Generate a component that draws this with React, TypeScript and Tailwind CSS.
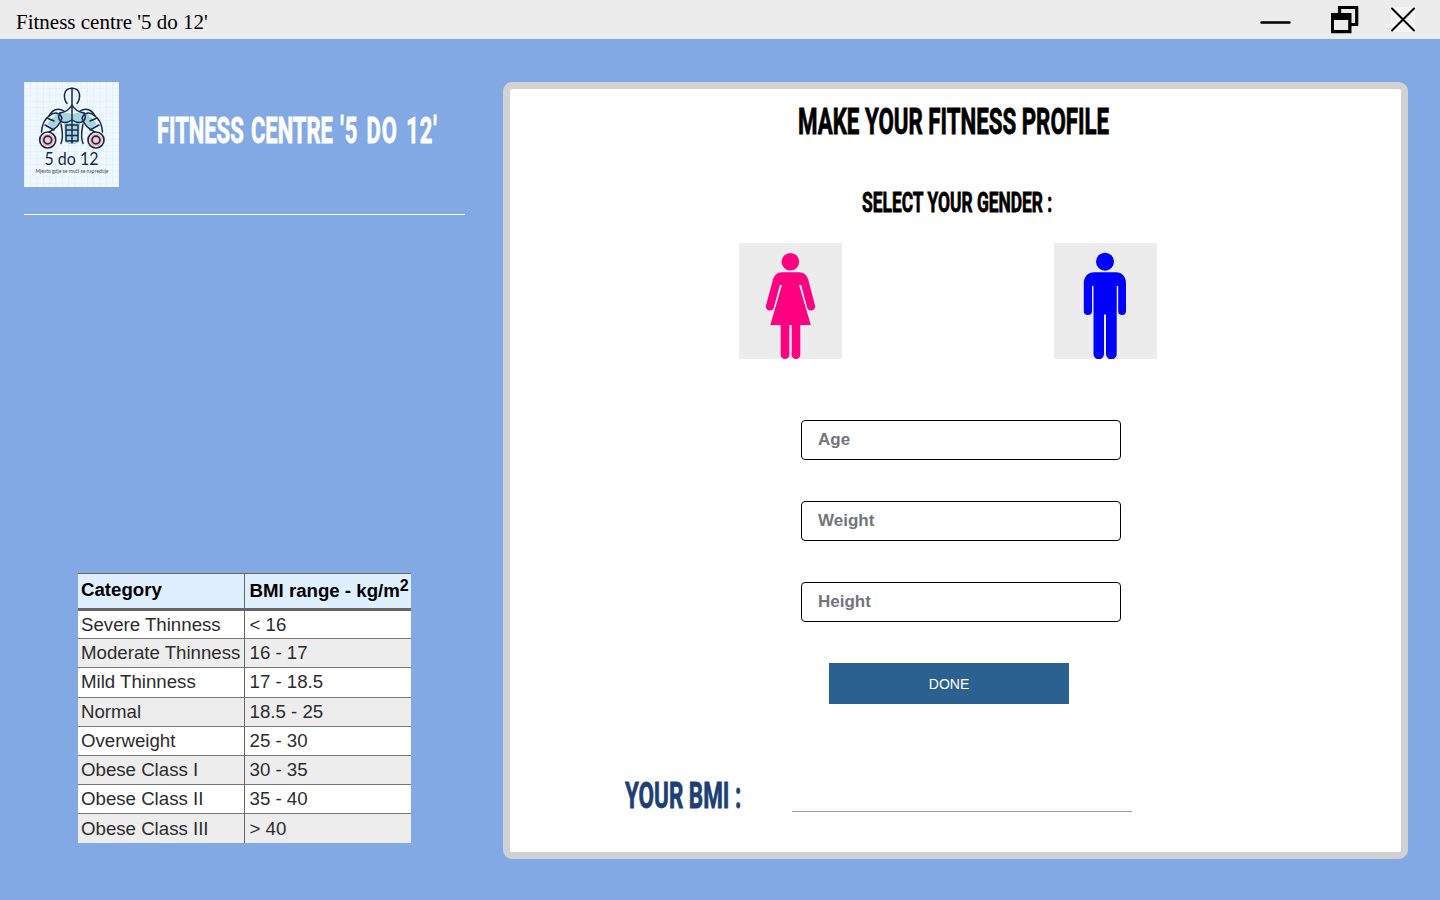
const display = "inline-block whitespace-nowrap origin-left font-['Roboto','Liberation_Sans',sans-serif] font-bold [-webkit-text-stroke:0.8px_currentColor]";

const rows: [string, string][] = [
  ["Severe Thinness", "< 16"],
  ["Moderate Thinness", "16 - 17"],
  ["Mild Thinness", "17 - 18.5"],
  ["Normal", "18.5 - 25"],
  ["Overweight", "25 - 30"],
  ["Obese Class I", "30 - 35"],
  ["Obese Class II", "35 - 40"],
  ["Obese Class III", "> 40"],
];

function Logo() {
  return (
    <svg width="95" height="105" viewBox="0 0 95 105" className="block shrink-0">
      <defs>
        <pattern id="grid" width="6.3" height="6.3" patternUnits="userSpaceOnUse">
          <path d="M0 0H6.3M0 0V6.3" stroke="#d9ebf4" strokeWidth="1" fill="none" />
        </pattern>
      </defs>
      <rect width="95" height="105" fill="#eff8fe" />
      <rect width="95" height="105" fill="url(#grid)" />
      <g fill="#a5d5de">
        <path d="M38 30L48 32L58 30L64 31L66 36L61 41L48 39L35 41L30 36L32 31Z" />
        <path d="M40 41H56L55 60L51 62H45L41 60Z" />
        <path d="M29 35L23 42L30 47L35 39Z" />
        <path d="M67 35L73 42L66 47L61 39Z" />
      </g>
      <g fill="none" stroke="#17294d" strokeWidth="1.5" strokeLinecap="round" strokeLinejoin="round">
        <path d="M43 21.500C39 16 39 6.300 48 6.300S57 16 53 21.500" />
        <path d="M48 6.300V61" />
        <path d="M48 23C46 27 41 30 36 31M48 23C50 27 55 30 60 31" />
        <path d="M40 29C34 25 28 28 25 34C21 37 18 43 17.500 50M56 29C62 25 68 28 71 34C75 37 78 43 78.500 50" />
        <path d="M25 34C31 29 36 31 38 36C36 42 32 47 25 50M71 34C65 29 60 31 58 36C60 42 64 47 71 50" />
        <path d="M23 36L30 39M73 36L66 39M21 43L30 48M75 43L66 48" />
        <path d="M36 31C32 38 39 44 48 38C57 44 64 38 60 31" />
        <path d="M37 42C38 49 40 54 37 61.500M59 42C58 49 56 54 59 61.500" />
        <path d="M42 43H54V48H42ZM42 48H54V53.500H42ZM42 53.500H54V59H42Z" />
      </g>
      <g stroke="#17294d" strokeWidth="1.700">
        <circle cx="23.700" cy="58" r="8" fill="#fff" />
        <circle cx="23.700" cy="58" r="6.300" fill="#fbb3b5" stroke="none" />
        <circle cx="23.700" cy="58" r="3.900" fill="#fbc6c6" />
        <circle cx="72" cy="58" r="8" fill="#fff" />
        <circle cx="72" cy="58" r="6.300" fill="#fbb3b5" stroke="none" />
        <circle cx="72" cy="58" r="3.900" fill="#fbc6c6" />
      </g>
      <text x="20.500" y="82.700" textLength="54" lengthAdjust="spacingAndGlyphs" fontSize="17" fill="#17294d" className="font-['Lato',sans-serif]">5 do 12</text>
      <text x="11.500" y="91" textLength="73" lengthAdjust="spacingAndGlyphs" fontSize="5" fill="#3c5068" className="font-['Lato',sans-serif]">Mjesto gdje se muči se napreduje</text>
    </svg>
  );
}

function Female() {
  return (
    <svg width="103" height="116" viewBox="0 0 103 116" className="block" fill="#ff0080">
      <circle cx="51.400" cy="18.700" r="8.800" />
      <path d="M43 29.300H60C65 29.300 68 32.500 69.200 36.500L76 62.500C77.200 67.500 70 69.500 68.300 65L62.200 42H60L71.800 82H61.300V111.700A4.300 4.300 0 0 1 52.700 111.700V82H50.300V111.700A4.300 4.300 0 0 1 41.700 111.700V82H31.300L43 42H40.800L34.700 65C33 69.500 25.800 67.500 27 62.500L34 36.500C35.200 32.500 38.200 29.300 43 29.300Z" />
    </svg>
  );
}

function Male() {
  return (
    <svg width="103" height="116" viewBox="0 0 103 116" className="block" fill="#0000ff">
      <circle cx="51" cy="18.700" r="9" />
      <path d="M40 29.300H62C68 29.300 72 34 72 40V68A3.900 3.900 0 0 1 64.200 68V43H62.700V111A5.300 5.300 0 0 1 52 111V71.500H50V111A5.200 5.200 0 0 1 39.500 111V43H38V68A4.100 4.100 0 0 1 29.800 68V40C29.800 34 34 29.300 40 29.300Z" />
    </svg>
  );
}

export default function App() {
  return (
    <div className="flex h-[900px] w-[1440px] flex-col overflow-hidden bg-[#83a9e4] text-black">
      <header className="flex h-[39px] shrink-0 items-start bg-[#ececec] pl-4">
        <span className="mt-[7px] font-['Liberation_Serif',serif] text-[21px] leading-[30px]">Fitness centre '5 do 12'</span>
        <svg width="180" height="39" viewBox="1260 0 180 39" className="ml-auto block">
          <path d="M1261.500 22.500H1289.500" stroke="#000" strokeWidth="2.400" strokeLinecap="round" />
          <path d="M1339.500 14V7.500H1356.700V24.500H1350" fill="none" stroke="#000" strokeWidth="3.200" />
          <path d="M1331 13H1351.500V33.200H1331ZM1334 20V30H1348.200V20Z" fillRule="evenodd" />
          <rect x="1391" y="7" width="24" height="25" fill="#f4f4f4" />
          <path d="M1392 8.500L1414 30.500M1414 8.500L1392 30.500" stroke="#000" strokeWidth="2" strokeLinecap="round" />
        </svg>
      </header>

      <main className="flex grow items-start pt-[43px] pl-6">
        <aside className="flex w-[441px] shrink-0 flex-col">
          <div className="flex h-[133px] items-start border-b border-white">
            <Logo />
            <h1 className="ml-[38px] mt-[27px] w-[280px] text-[36px] leading-[42px] text-white">
              <span className={`${display} scale-x-[0.61] [word-spacing:3px]`}>
                FITNESS CENTRE <span className="tracking-[1.6px]">'5 DO 12'</span>
              </span>
            </h1>
          </div>
          <table className="mt-[358px] ml-[54px] h-[270px] w-[333px] table-fixed border-collapse bg-white text-left font-['Liberation_Sans',sans-serif] text-[18.67px] leading-[20px] text-[#2c2c2c]">
            <thead>
              <tr className="h-[36px] border-t border-b-[3px] border-[#666] bg-[#e0efff] text-black">
                <th className="w-[166px] border-r border-[#666] pb-[2px] pl-[3px]">Category</th>
                <th className="whitespace-nowrap pl-[5px]">
                  BMI range - kg/m<sup className="-top-[6px] text-[16px] leading-none">2</sup>
                </th>
              </tr>
            </thead>
            <tbody>
              {rows.map(([name, range]) => (
                <tr key={name} className="h-[29.200px] border-t border-[#777] even:bg-[#ededed]">
                  <td className="whitespace-nowrap border-r border-[#666] pl-[3px]">{name}</td>
                  <td className="pl-[5px]">{range}</td>
                </tr>
              ))}
            </tbody>
          </table>
        </aside>

        <section className="ml-[38px] flex h-[777px] w-[905px] flex-col rounded-[9px] border-[7px] border-[#d1d1d1] bg-white">
          <h2 className="mt-[11px] ml-[288px] h-[42px] w-[312px] text-[36px] leading-[42px]">
            <span className={`${display} scale-x-[0.619]`}>MAKE YOUR FITNESS PROFILE</span>
          </h2>
          <h3 className="mt-[42px] ml-[352px] h-[34px] w-[190px] text-[28px] leading-[34px]">
            <span className={`${display} scale-x-[0.621]`}>SELECT YOUR GENDER :</span>
          </h3>
          <div className="mt-[25px] ml-[229px] flex gap-[212px]">
            <button aria-label="Female" className="bg-[#ececec]"><Female /></button>
            <button aria-label="Male" className="bg-[#ececec]"><Male /></button>
          </div>
          <form className="mt-[61px] ml-[291px] flex flex-col font-['Liberation_Sans',sans-serif]">
            <div className="flex flex-col gap-[41px]">
              {["Age", "Weight", "Height"].map((label) => (
                <input key={label} placeholder={label} className="h-10 w-80 rounded border border-black bg-white px-4 text-[17px] font-bold placeholder:text-[#72757a] placeholder:opacity-100" />
              ))}
            </div>
            <button type="button" className="mt-[41px] ml-7 h-[41px] w-60 bg-[#2a6190] pt-px text-[14px] text-white">DONE</button>
          </form>
          <div className="mt-[70px] ml-[115px] flex items-start">
            <span className="h-[42px] w-[167px] text-[36px] leading-[42px] text-[#1c3f75]">
              <span className={`${display} scale-x-[0.624]`}>YOUR BMI :</span>
            </span>
            <div className="h-[38px] w-[340px] border-b border-[#9e9e9e]" />
          </div>
        </section>
      </main>
    </div>
  );
}
